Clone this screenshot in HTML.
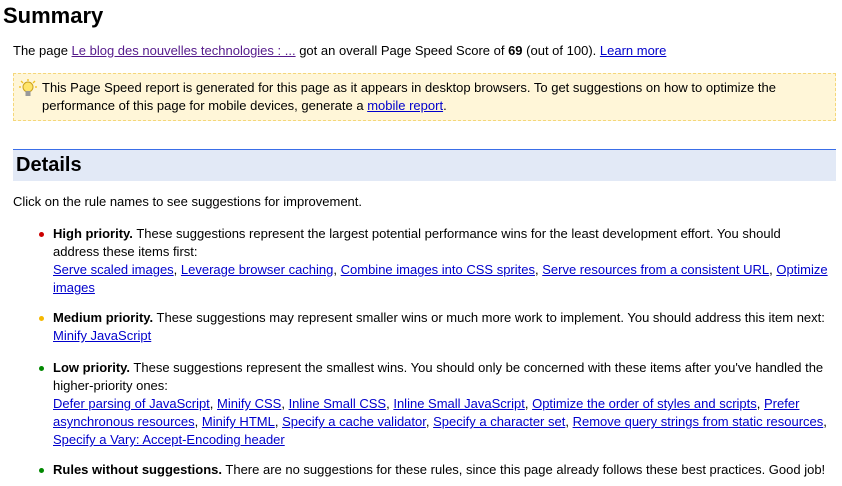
<!DOCTYPE html>
<html><head><style>
body{margin:0;width:842px;height:486px;overflow:hidden;background:#fff;font-family:"Liberation Sans",Arial,sans-serif;font-size:13px;color:#000;position:relative}
a{color:#00c;text-decoration:underline}
a.v{color:#551a8b}
.abs{position:absolute;line-height:18px}
h1{position:absolute;left:3px;top:3px;margin:0;font-size:22px;font-weight:bold}
.box{position:absolute;left:13px;top:73px;width:821px;height:46px;background:#fff6d8;border:1px dashed #f5d77a}
.det{position:absolute;left:13px;top:149px;width:823px;height:31px;background:#e2e9f6;border-top:1px solid #3a6ee8}
.det span{position:absolute;left:3px;top:4px;font-size:20px;font-weight:bold}
.dot{position:absolute;width:5px;height:5px;border-radius:50%;left:39px}
</style></head><body>
<h1>Summary</h1>
<div class="abs" style="left:13px;top:42px">The page <a class="v" href="#">Le blog des nouvelles technologies : ...</a> got an overall Page Speed Score of <b>69</b> (out of 100). <a href="#">Learn more</a></div>
<div class="box"></div>
<svg style="position:absolute;left:19px;top:79px" width="18" height="20" viewBox="0 0 18 20"><g stroke="#f0c020" stroke-width="1.3"><line x1="9" y1="0" x2="9" y2="2"/><line x1="2" y1="2" x2="4" y2="4"/><line x1="16" y1="2" x2="14" y2="4"/><line x1="0" y1="8" x2="2" y2="8"/><line x1="16" y1="8" x2="18" y2="8"/></g><circle cx="9" cy="8" r="5" fill="#ffe46a" stroke="#c9a020"/><rect x="6.5" y="12" width="5" height="5" fill="#999"/></svg>
<div class="abs" style="left:42px;top:79px;width:790px">This Page Speed report is generated for this page as it appears in desktop browsers. To get suggestions on how to optimize the performance of this page for mobile devices, generate a <a href="#">mobile report</a>.</div>
<div class="det"><span>Details</span></div>
<div class="abs" style="left:13px;top:193px">Click on the rule names to see suggestions for improvement.</div>
<div class="dot" style="top:232px;background:#c00"></div>
<div class="abs" style="left:53px;top:225px;width:785px"><b>High priority.</b> These suggestions represent the largest potential performance wins for the least development effort. You should<br>address these items first:<br><a href="#">Serve scaled images</a>, <a href="#">Leverage browser caching</a>, <a href="#">Combine images into CSS sprites</a>, <a href="#">Serve resources from a consistent URL</a>, <a href="#">Optimize images</a></div>
<div class="dot" style="top:316px;background:#f5b800"></div>
<div class="abs" style="left:53px;top:309px;width:785px"><b>Medium priority.</b> These suggestions may represent smaller wins or much more work to implement. You should address this item next:<br><a href="#">Minify JavaScript</a></div>
<div class="dot" style="top:366px;background:#080"></div>
<div class="abs" style="left:53px;top:359px;width:785px"><b>Low priority.</b> These suggestions represent the smallest wins. You should only be concerned with these items after you've handled the higher-priority ones:<br><a href="#">Defer parsing of JavaScript</a>, <a href="#">Minify CSS</a>, <a href="#">Inline Small CSS</a>, <a href="#">Inline Small JavaScript</a>, <a href="#">Optimize the order of styles and scripts</a>, <a href="#">Prefer asynchronous resources</a>, <a href="#">Minify HTML</a>, <a href="#">Specify a cache validator</a>, <a href="#">Specify a character set</a>, <a href="#">Remove query strings from static resources</a>, <a href="#">Specify a Vary: Accept-Encoding header</a></div>
<div class="dot" style="top:468px;background:#080"></div>
<div class="abs" style="left:53px;top:461px;width:789px;white-space:nowrap"><b>Rules without suggestions.</b> There are no suggestions for these rules, since this page already follows these best practices. Good job!</div>
</body></html>
